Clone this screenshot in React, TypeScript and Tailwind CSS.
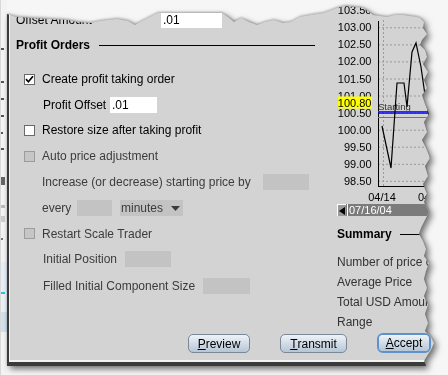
import React from "react";

type BoxState = "checked" | "empty" | "disabled";

function Box({ state }: { state: BoxState }) {
  if (state === "disabled") {
    return <div className="w-[11px] h-[11px] shrink-0 border border-[#9c9c9c] bg-[#c6c6c6]" />;
  }
  return (
    <div className="w-[11px] h-[11px] shrink-0 border border-[#6a6a6a] bg-white flex items-center justify-center">
      {state === "checked" && (
        <svg width="9" height="9" viewBox="0 0 9 9">
          <path d="M1 4.2 L3.4 6.8 L8 1.2" stroke="#000" strokeWidth="1.7" fill="none" />
        </svg>
      )}
    </div>
  );
}

function Btn({ u, rest, w }: { u: string; rest: string; w: string }) {
  return (
    <div
      className={`${w} h-[19px] shrink-0 rounded-[5px] border border-[#7b8794] bg-gradient-to-b from-[#eef3f8] to-[#b6c6d6] flex items-center justify-center text-[12px] text-black`}
    >
      <span className="underline underline-offset-[1px]">{u}</span>
      {rest}
    </div>
  );
}

const labels: [string, number][] = [
  ["103.50", 10.2],
  ["103.00", 27.3],
  ["102.50", 44.4],
  ["102.00", 61.4],
  ["101.50", 78.5],
  ["101.00", 95.5],
  ["100.50", 112.6],
  ["100.00", 129.7],
  ["99.50", 146.7],
  ["99.00", 163.8],
  ["98.50", 180.8],
];

function Chart() {
  return (
    <svg width="102" height="204" viewBox="0 0 102 204" className="shrink-0 overflow-visible">
      {labels.map(([t, y]) => (
        <line key={"g" + t} x1="43" x2="102" y1={y + 0.5} y2={y + 0.5} stroke="#9a9a9a" strokeWidth="1" strokeDasharray="2 2" />
      ))}
      <line x1="48.5" x2="48.5" y1="20" y2="186" stroke="#9a9a9a" strokeWidth="1" strokeDasharray="2 2" />
      <line x1="94.5" x2="94.5" y1="20" y2="186" stroke="#9a9a9a" strokeWidth="1" strokeDasharray="2 2" />
      <line x1="43.5" x2="43.5" y1="21" y2="187" stroke="#000" strokeWidth="1" />
      <line x1="43" x2="102" y1="186.5" y2="186.5" stroke="#000" strokeWidth="1" />
      {labels.map(([t, y]) => (
        <text key={t} x="36.5" y={y + 4} textAnchor="end" fontSize="11" fill="#000" fontFamily="Liberation Sans, Arial, sans-serif">
          {t}
        </text>
      ))}
      <rect x="3" y="96.5" width="34" height="12" fill="#ffff00" />
      <text x="36.5" y="106.5" textAnchor="end" fontSize="11" fill="#000" fontFamily="Liberation Sans, Arial, sans-serif">
        100.80
      </text>
      <text x="43" y="110" fontSize="9.5" fill="#333" fontFamily="Liberation Sans, Arial, sans-serif">
        Starting
      </text>
      <line x1="43" x2="102" y1="111.5" y2="111.5" stroke="#e00000" strokeWidth="1" />
      <line x1="43" x2="102" y1="113" y2="113" stroke="#0000ff" strokeWidth="1.6" />
      <line x1="43" x2="102" y1="117.5" y2="117.5" stroke="#22b022" strokeWidth="1" />
      <polyline
        points="47,126 56,168 62,83 69,83 72,107 77,52 81,43 86,67 90,95 95,120"
        fill="none"
        stroke="#000"
        strokeWidth="1.2"
      />
      <text x="47" y="201" textAnchor="middle" fontSize="11" fill="#000" fontFamily="Liberation Sans, Arial, sans-serif">
        04/14
      </text>
      <text x="83" y="201" fontSize="11" fill="#000" fontFamily="Liberation Sans, Arial, sans-serif">
        04/15
      </text>
    </svg>
  );
}

function LeftStrip() {
  return (
    <div className="w-[7px] h-full shrink-0 bg-[#f3f3f3] flex flex-col border-l border-[#d8d8d8]">
      <div className="h-[48px]" />
      <div className="h-[2px] w-[3px] bg-[#555]" />
      <div className="h-[31px]" />
      <div className="h-[2px] w-[3px] bg-[#555]" />
      <div className="h-[15px]" />
      <div className="h-[2px] w-[3px] bg-[#555]" />
      <div className="h-[15px]" />
      <div className="h-[2px] w-[3px] bg-[#555]" />
      <div className="h-[15px]" />
      <div className="h-[2px] w-[2px] bg-[#555]" />
      <div className="h-[14px]" />
      <div className="h-[2px] w-[3px] bg-[#555]" />
      <div className="h-[27px]" />
      <div className="h-[8px] w-[4px] bg-[#666]" />
      <div className="h-[20px]" />
      <div className="h-[3px] w-[4px] bg-[#bbb]" />
      <div className="h-[8px]" />
      <div className="h-[6px] w-[4px] bg-[#ccc]" />
      <div className="h-[16px]" />
      <div className="h-[2px] w-[2px] bg-[#777]" />
      <div className="h-[22px]" />
      <div className="h-[30px] w-[7px] bg-[#e6eef6]" />
      <div className="h-[2px] w-[4px] bg-[#30c0e0]" />
      <div className="h-[18px] w-[7px] bg-[#eaf0f6]" />
      <div className="h-[20px] w-[7px] bg-[#d2e0ee]" />
    </div>
  );
}

export default function App() {
  return (
    <div className="w-[448px] h-[375px] bg-[#f6f6f6] flex overflow-hidden font-['Liberation_Sans',Arial,sans-serif] text-[12px] leading-none text-black">
      <LeftStrip />
      <div className="h-[366px] w-[430px] shrink-0 [filter:drop-shadow(0px_-1px_1px_rgba(0,0,0,0.25))_drop-shadow(3px_3px_3px_rgba(0,0,0,0.55))]">
        <div className="h-full w-full border-l-2 border-b-4 border-[#3a3a3a] [clip-path:polygon(0px_14px,9px_17px,23px_18px,43px_19px,60px_20px,70px_22px,83px_23px,93px_21px,110px_19px,121px_21px,128px_25px,135px_21px,143px_17px,151px_13px,215px_13px,221px_17px,227px_22px,234px_18px,242px_22px,250px_25px,258px_22px,267px_20px,276px_23px,284px_22px,293px_17px,304px_15px,317px_13px,330px_8px,338px_6px,348px_7px,356px_8px,361px_11px,366px_15px,380px_17px,388px_15px,396px_15px,403px_16px,410px_17px,413px_18px,417px_22px,416px_28px,420px_34px,415px_40px,413px_45px,418px_50px,420px_57px,416px_64px,421px_72px,417px_80px,420px_88px,415px_95px,418px_104px,422px_114px,417px_122px,420px_132px,415px_140px,419px_148px,423px_158px,418px_166px,421px_176px,416px_184px,420px_194px,417px_202px,422px_212px,418px_220px,414px_228px,412px_234px,416px_241px,419px_249px,417px_256px,422px_263px,419px_271px,417px_279px,420px_288px,417px_296px,421px_305px,418px_314px,421px_323px,418px_331px,424px_337px,427px_343px,424px_350px,420px_356px,417px_361px,419px_366px,0px_366px)]">
          <div className="h-full border-l border-b-2 border-[#f2f2f2] bg-[#d3d3d3] flex flex-col">
            <div className="h-[333px] flex shrink-0">
              {/* left column */}
              <div className="w-[305px] shrink-0 pl-[6px] flex flex-col">
                <div className="mt-[12px] h-[16px] flex items-center">
                  <span className="w-[145px] whitespace-nowrap">Offset Amount</span>
                  <div className="w-[61px] h-[16px] bg-white flex items-center pl-[2px]">.01</div>
                </div>
                <div className="mt-[9px] h-[16px] flex items-center">
                  <span className="font-bold whitespace-nowrap">Profit Orders</span>
                  <div className="ml-[9px] flex-1 h-px bg-black" />
                </div>
                <div className="mt-[13px] h-[26px] flex items-center">
                  <div className="ml-[8px]"><Box state="checked" /></div>
                  <span className="ml-[7px] whitespace-nowrap">Create profit taking order</span>
                </div>
                <div className="h-[25px] flex items-center">
                  <span className="ml-[27px] w-[67px] whitespace-nowrap">Profit Offset</span>
                  <div className="w-[47px] h-[16px] bg-white flex items-center pl-[2px]">.01</div>
                </div>
                <div className="h-[26px] flex items-center">
                  <div className="ml-[8px]"><Box state="empty" /></div>
                  <span className="ml-[7px] whitespace-nowrap">Restore size after taking profit</span>
                </div>
                <div className="h-[26px] flex items-center text-[#3c3c3c]">
                  <div className="ml-[8px]"><Box state="disabled" /></div>
                  <span className="ml-[7px] whitespace-nowrap">Auto price adjustment</span>
                </div>
                <div className="h-[26px] flex items-center text-[#3c3c3c]">
                  <span className="ml-[26px] w-[221px] whitespace-nowrap">Increase (or decrease) starting price by</span>
                  <div className="w-[46px] h-[16px] bg-[#c3c3c3]" />
                </div>
                <div className="h-[26px] flex items-center text-[#3c3c3c]">
                  <span className="ml-[26px] w-[35px] whitespace-nowrap">every</span>
                  <div className="w-[35px] h-[16px] bg-[#c3c3c3]" />
                  <div className="ml-[8px] w-[63px] h-[16px] bg-[#c3c3c3] flex items-center justify-between pl-[1px] pr-[3px]">
                    <span>minutes</span>
                    <svg width="9" height="5" viewBox="0 0 9 5">
                      <path d="M0 0 H9 L4.5 5 Z" fill="#3a3a3a" />
                    </svg>
                  </div>
                </div>
                <div className="h-[25px] flex items-center text-[#3c3c3c]">
                  <div className="ml-[8px]"><Box state="disabled" /></div>
                  <span className="ml-[7px] whitespace-nowrap">Restart Scale Trader</span>
                </div>
                <div className="h-[26px] flex items-center text-[#3c3c3c]">
                  <span className="ml-[27px] w-[82px] whitespace-nowrap">Initial Position</span>
                  <div className="w-[46px] h-[16px] bg-[#c3c3c3]" />
                </div>
                <div className="h-[27px] flex items-center text-[#3c3c3c]">
                  <span className="ml-[27px] w-[160px] whitespace-nowrap">Filled Initial Component Size</span>
                  <div className="w-[47px] h-[16px] bg-[#c3c3c3]" />
                </div>
              </div>
              {/* right column */}
              <div className="ml-[20px] flex-1 min-w-0 flex flex-col overflow-hidden">
                <Chart />
                <div className="ml-[2px] h-[12px] bg-[#7b7b7b] flex items-center shrink-0">
                  <div className="w-[9px] h-[12px] border-l border-t border-white bg-[#9a9a9a] flex items-center justify-center">
                    <svg width="6" height="8" viewBox="0 0 6 8">
                      <path d="M6 0 V8 L0 4 Z" fill="#000" />
                    </svg>
                  </div>
                  <div className="w-px h-[12px] bg-white ml-[1px]" />
                  <span className="ml-[1px] text-[11px] text-white whitespace-nowrap">07/16/04</span>
                </div>
                <div className="mt-[10px] ml-[2px] h-[16px] flex items-center shrink-0">
                  <span className="font-bold whitespace-nowrap">Summary</span>
                  <div className="ml-[8px] flex-1 h-px bg-black" />
                </div>
                <div className="mt-[10px] ml-[2px] flex flex-col text-[#333]">
                  <div className="h-[20px] flex items-center whitespace-nowrap">Number of price changes</div>
                  <div className="h-[20px] flex items-center whitespace-nowrap">Average Price</div>
                  <div className="h-[20px] flex items-center whitespace-nowrap">Total USD Amount</div>
                  <div className="h-[20px] flex items-center whitespace-nowrap">Range</div>
                </div>
              </div>
            </div>
            <div className="h-[20px] flex items-start pl-[178px] shrink-0">
              <div className="mt-[1px]"><Btn u="P" rest="review" w="w-[62px]" /></div>
              <div className="mt-[1px] ml-[30px]"><Btn u="T" rest="ransmit" w="w-[67px]" /></div>
              <div className="ml-[30px] w-[54px] h-[20px] rounded-[6px] border-2 border-[#5f91cb] flex items-center justify-center shrink-0">
                <div className="w-[50px] h-[16px] rounded-[4px] bg-gradient-to-b from-[#eef3f8] to-[#b6c6d6] flex items-center justify-center text-[12px]">
                  <span className="underline underline-offset-[1px]">A</span>ccept
                </div>
              </div>
            </div>
          </div>
        </div>
      </div>
    </div>
  );
}
